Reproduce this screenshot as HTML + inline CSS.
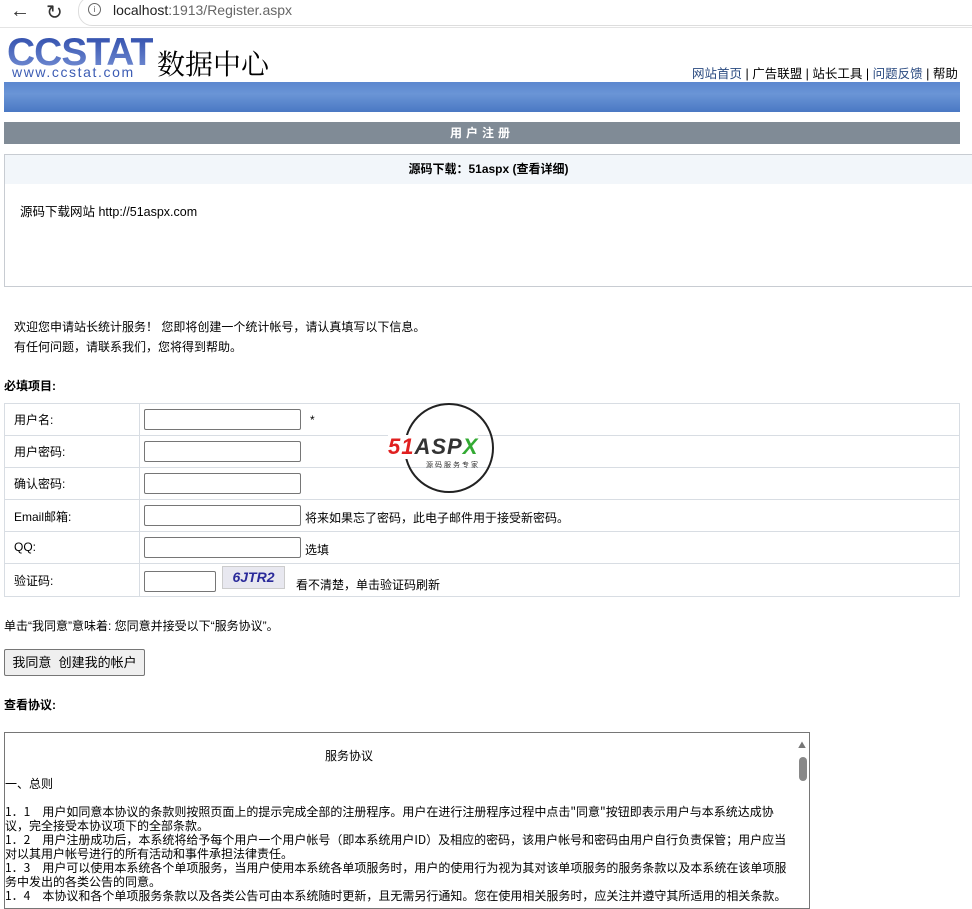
<!DOCTYPE html>
<html><head><meta charset="utf-8"><style>
body{margin:0;width:972px;height:894px;overflow:hidden;background:#fff;font-family:"Liberation Sans","Noto Sans CJK SC",sans-serif;font-size:12px;color:#000;position:relative}
.a{position:absolute;white-space:nowrap}
.inp{position:absolute;left:144px;width:155px;height:19px;border:1px solid #767676;border-radius:2px;background:#fff}
.row{position:absolute;left:4px;width:955px;height:31px;border-top:1px solid #d8dde3}
.lbl{position:absolute;left:14px;font-size:12px}
</style></head><body>
<div class="a" style="left:10px;top:0;font-size:20px;color:#333">&#8592;</div>
<div class="a" style="left:46px;top:0;font-size:20px;color:#333">&#8635;</div>
<div class="a" style="left:78px;top:-4px;width:920px;height:28px;border:1px solid #ddd;border-radius:14px;background:#fff"></div>
<div class="a" style="left:88px;top:3px;width:11px;height:11px;border:1px solid #666;border-radius:50%;font-size:8px;text-align:center;line-height:11px;color:#555">i</div>
<div class="a" style="left:113px;top:2px;font-size:14px;color:#222">localhost<span style="color:#666">:1913/Register.aspx</span></div>
<div class="a" style="left:0;top:27px;width:972px;height:1px;background:#e4e4e4"></div>
<div class="a" style="left:7px;top:31px;font-size:39px;font-weight:bold;letter-spacing:-1px;background:linear-gradient(#2a48a8,#7b95d8);-webkit-background-clip:text;color:transparent">CCSTAT</div>
<div class="a" style="left:12px;top:64px;font-size:14px;color:#3c5cb4;letter-spacing:1.6px">www.ccstat.com</div>
<div class="a" style="left:157px;top:43px;font-size:28px;font-family:'Noto Serif CJK SC','Noto Sans CJK SC',serif">数据中心</div>
<div class="a" style="left:692px;top:63px;font-size:12.5px"><span style="color:#2a4a80">网站首页</span> | 广告联盟 | 站长工具 | <span style="color:#2a4a80">问题反馈</span> | 帮助</div>
<div class="a" style="left:4px;top:82px;width:956px;height:30px;background:linear-gradient(#5b87cf,#6a95d6 40%,#4a78c4)"></div>
<div class="a" style="left:4px;top:122px;width:956px;height:22px;background:#808b96;color:#fff;font-weight:bold;text-align:center;line-height:22px;letter-spacing:4px;font-size:12px">用户注册</div>
<div class="a" style="left:4px;top:154px;width:970px;height:131px;border:1px solid #c8ccd2;border-right:none"></div>
<div class="a" style="left:5px;top:155px;width:967px;height:29px;background:#f2f6fa;text-align:center;line-height:29px;font-weight:bold">源码下载：51aspx (查看详细)</div>
<div class="a" style="left:20px;top:201px;font-size:12.5px">源码下载网站 http://51aspx.com</div>
<div class="a" style="left:14px;top:318px">欢迎您申请站长统计服务！ 您即将创建一个统计帐号，请认真填写以下信息。</div>
<div class="a" style="left:14px;top:338px">有任何问题，请联系我们，您将得到帮助。</div>
<div class="a" style="left:4px;top:377px;font-weight:bold">必填项目:</div>
<div class="a" style="left:4px;top:403px;width:954px;height:192px;border:1px solid #d8dde3"></div>
<div class="a" style="left:139px;top:403px;width:1px;height:193px;background:#d8dde3"></div>
<div class="row" style="top:435px"></div><div class="row" style="top:467px"></div><div class="row" style="top:499px"></div><div class="row" style="top:531px"></div><div class="row" style="top:563px"></div>
<div class="a lbl" style="top:411px">用户名:</div><div class="inp" style="top:409px"></div><div class="a" style="left:310px;top:413px">*</div>
<div class="a lbl" style="top:443px">用户密码:</div><div class="inp" style="top:441px"></div>
<div class="a lbl" style="top:475px">确认密码:</div><div class="inp" style="top:473px"></div>
<div class="a lbl" style="top:508px">Email邮箱:</div><div class="inp" style="top:505px"></div><div class="a" style="left:305px;top:509px">将来如果忘了密码，此电子邮件用于接受新密码。</div>
<div class="a lbl" style="top:540px">QQ:</div><div class="inp" style="top:537px"></div><div class="a" style="left:305px;top:541px">选填</div>
<div class="a lbl" style="top:572px">验证码:</div><div class="inp" style="top:571px;width:70px"></div>
<div class="a" style="left:222px;top:566px;width:61px;height:21px;background:#e8e8f0;border:1px solid #ccc;color:#2a2a9a;font-weight:bold;font-style:italic;font-size:14px;line-height:20px;text-align:center">6JTR2</div>
<div class="a" style="left:296px;top:576px">看不清楚，单击验证码刷新</div>
<div class="a" style="left:404px;top:403px;width:86px;height:86px;border:2px solid #222;border-radius:50%"></div>
<div class="a" style="left:388px;top:435px;font-size:22px;font-weight:bold;font-style:italic;background:#fff;line-height:24px;letter-spacing:1px"><span style="color:#e02020">51</span><span style="color:#333">ASP</span><span style="color:#3a3">X</span></div>
<div class="a" style="left:426px;top:460px;font-size:7px;color:#333;letter-spacing:2px">源码服务专家</div>
<div class="a" style="left:4px;top:617px">单击“我同意”意味着: 您同意并接受以下“服务协议”。</div>
<div class="a" style="left:4px;top:649px;width:139px;height:25px;border:1px solid #767676;border-radius:2px;background:#efefef;font-size:13px;line-height:25px;text-align:center">我同意&nbsp; 创建我的帐户</div>
<div class="a" style="left:4px;top:696px;font-weight:bold">查看协议:</div>
<div class="a" style="left:4px;top:732px;width:804px;height:175px;border:1px solid #767676;overflow:hidden;font-family:'Noto Sans CJK SC',sans-serif;font-size:12px;line-height:14px">
<div style="position:absolute;right:2px;top:24px;width:8px;height:24px;background:#888;border-radius:4px"></div>
<div style="position:absolute;right:3px;top:6px;font-size:8px;color:#777">▲</div>
<div style="position:absolute;left:320px;top:16px">服务协议</div>
<div style="position:absolute;left:0;top:44px">一、总则</div>
<div style="position:absolute;left:0;top:72px;width:785px;white-space:normal">1．1　用户如同意本协议的条款则按照页面上的提示完成全部的注册程序。用户在进行注册程序过程中点击"同意"按钮即表示用户与本系统达成协议，完全接受本协议项下的全部条款。<br>1．2　用户注册成功后，本系统将给予每个用户一个用户帐号（即本系统用户ID）及相应的密码，该用户帐号和密码由用户自行负责保管；用户应当对以其用户帐号进行的所有活动和事件承担法律责任。<br>1．3　用户可以使用本系统各个单项服务，当用户使用本系统各单项服务时，用户的使用行为视为其对该单项服务的服务条款以及本系统在该单项服务中发出的各类公告的同意。<br>1．4　本协议和各个单项服务条款以及各类公告可由本系统随时更新，且无需另行通知。您在使用相关服务时，应关注并遵守其所适用的相关条款。</div>
</div>
</body></html>
